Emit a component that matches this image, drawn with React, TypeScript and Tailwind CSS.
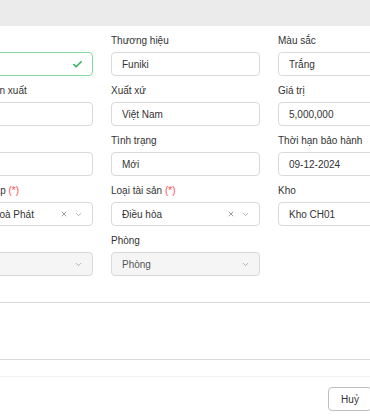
import React from 'react';
import { Check, ChevronDown, X } from 'lucide-react';

type Field = {
    label?: string;
    required?: boolean;
    value?: string;
    kind?: 'input' | 'select' | 'disabled' | 'success' | 'empty';
    clear?: boolean;
};

const ROWS: Field[][] = [
    [
        { label: 'Tên tài sản', kind: 'success' },
        { label: 'Thương hiệu', value: 'Funiki' },
        { label: 'Màu sắc', value: 'Trắng' },
    ],
    [
        { label: 'Thời gian sản xuất' },
        { label: 'Xuất xứ', value: 'Việt Nam' },
        { label: 'Giá trị', value: '5,000,000' },
    ],
    [
        { label: 'Model' },
        { label: 'Tình trạng', value: 'Mới' },
        { label: 'Thời hạn bảo hành', value: '09-12-2024' },
    ],
    [
        { label: 'Nhà cung cấp', required: true, value: 'Nội thất Hoà Phát', kind: 'select', clear: true },
        { label: 'Loại tài sản', required: true, value: 'Điều hòa', kind: 'select', clear: true },
        { label: 'Kho', value: 'Kho CH01' },
    ],
    [
        { label: 'Tầng', kind: 'disabled' },
        { label: 'Phòng', value: 'Phòng', kind: 'disabled' },
        { kind: 'empty' },
    ],
];

const FormField: React.FC<{ f: Field }> = ({ f }) => {
    if (f.kind === 'empty') return <div />;

    const base = 'h-[24px] rounded-[4px] border flex items-center pl-[10px] pr-[9px] text-[10px]';
    let box = `${base} border-[#d9d9d9] bg-white text-[#333]`;
    if (f.kind === 'success') box = `${base} border-[#86dba3] bg-white`;
    if (f.kind === 'disabled') box = `${base} border-[#d9d9d9] bg-[#f5f5f5] text-[#555]`;

    return (
        <div>
            <div className="h-[14px] mb-[4px] text-[10px] leading-[14px] text-[#333] whitespace-nowrap">
                {f.label}
                {f.required && <span className="text-[#ff4d4f]"> (*)</span>}
            </div>
            <div className={box}>
                <span className="flex-1 truncate">{f.value}</span>
                {f.kind === 'success' && <Check className="w-[11px] h-[11px] text-[#2fb45f]" strokeWidth={3.5} />}
                {f.clear && <X className="w-[8px] h-[8px] text-[#8c8c8c] mr-[6px]" strokeWidth={2.5} />}
                {(f.kind === 'select' || f.kind === 'disabled') && (
                    <ChevronDown className="w-[9px] h-[9px] text-[#999]" strokeWidth={2} />
                )}
            </div>
        </div>
    );
};

export default function App() {
    return (
        <div className="w-[370px] h-[418px] overflow-hidden bg-white" style={{ fontFamily: '"Liberation Sans", Arial, sans-serif' }}>
            {/* modal header strip */}
            <div className="h-[26px] bg-[#ebebeb]" />

            {/* form body */}
            <div className="ml-[-56px] w-[483px] pt-[8px] pb-[16px]">
                <div className="grid grid-cols-[149px_149px_149px] gap-x-[18px] gap-y-[8px]">
                    {ROWS.flat().map((f, i) => (
                        <FormField key={i} f={f} />
                    ))}
                </div>
                <div className="mt-[8px]">
                    <div className="h-[14px] mb-[4px] text-[10px] leading-[14px] text-[#333]">Mô tả</div>
                    <div className="h-[58px] border border-[#d9d9d9] rounded-[4px]" />
                </div>
            </div>

            {/* footer */}
            <div className="border-t border-[#f0f0f0] pt-[10px] flex justify-end mr-[-2px]">
                <button className="h-[24px] w-[44px] rounded-[4px] border border-[#bfbfbf] bg-white text-[10px] text-[#333]">
                    Huỷ
                </button>
            </div>
        </div>
    );
}
